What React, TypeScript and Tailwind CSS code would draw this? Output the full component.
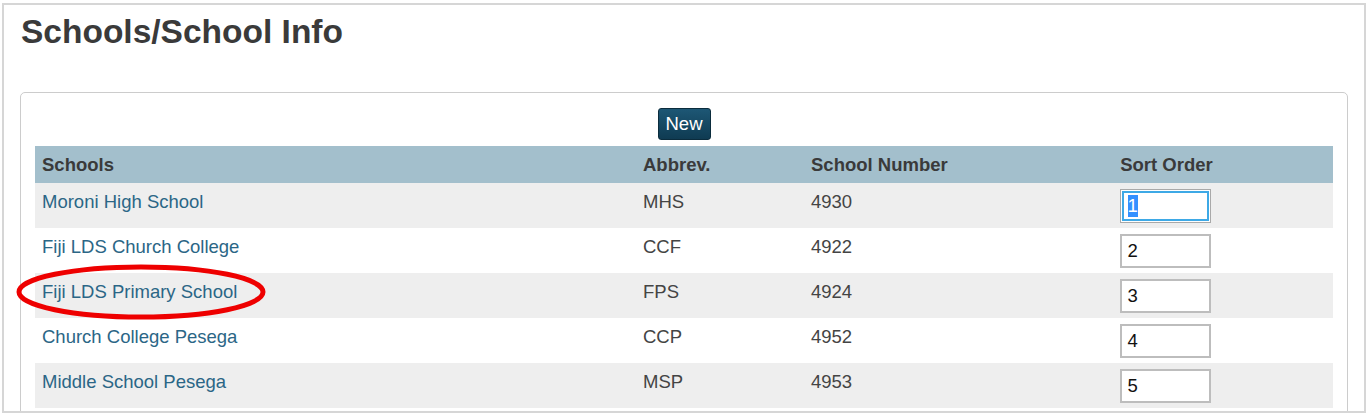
import React from 'react';

interface School {
  name: string;
  abbrev: string;
  number: string;
  order: string;
}

const schools: School[] = [
  { name: 'Moroni High School', abbrev: 'MHS', number: '4930', order: '1' },
  { name: 'Fiji LDS Church College', abbrev: 'CCF', number: '4922', order: '2' },
  { name: 'Fiji LDS Primary School', abbrev: 'FPS', number: '4924', order: '3' },
  { name: 'Church College Pesega', abbrev: 'CCP', number: '4952', order: '4' },
  { name: 'Middle School Pesega', abbrev: 'MSP', number: '4953', order: '5' },
];

const App: React.FC = () => {
  return (
    <div
      className="relative w-[1370px] h-[417px] bg-white overflow-hidden pt-[3px] pl-[2px]"
      style={{ fontFamily: '"Liberation Sans", Arial, sans-serif' }}
    >
      <div className="w-[1364px] h-[410px] border-2 border-[#d6d6d6] px-[16px] overflow-hidden">
        {/* Title */}
        <h1 className="text-[33.5px] leading-[38px] font-bold text-[#3a3a3a] pt-[8px] pl-[1px]">
          Schools/School Info
        </h1>

        {/* Card */}
        <div className="mt-[41px] w-[1328px] h-[400px] border border-[#cccccc] rounded-[5px] px-[14px] pt-[15px]">
          <div className="flex justify-center">
            <button className="h-[32px] w-[53px] rounded-[3px] border border-[#0b2c3d] bg-gradient-to-b from-[#1d5775] to-[#0f3b52] text-white text-[18.5px] leading-none">
              New
            </button>
          </div>

          {/* Table */}
          <div className="mt-[6px] w-[1298px] text-[18.5px]">
            <div className="flex h-[37px] items-center bg-[#a3bfcc] font-bold text-[#3a3a3a]">
              <div className="w-[601px] pl-[7px]">Schools</div>
              <div className="w-[168px] pl-[7px]">Abbrev.</div>
              <div className="w-[196px] pl-[7px]">School Number</div>
              <div className="flex-1 text-center">Sort Order</div>
            </div>
            {schools.map((s, i) => (
              <div
                key={s.name}
                className={`flex h-[45px] items-start pt-[6px] ${i % 2 === 0 ? 'bg-[#eeeeee]' : 'bg-white'}`}
              >
                <div className="w-[601px] pl-[7px] leading-[26px] text-[#2b6686]">{s.name}</div>
                <div className="w-[168px] pl-[7px] leading-[26px] text-[#444444]">{s.abbrev}</div>
                <div className="w-[196px] pl-[7px] leading-[26px] text-[#444444]">{s.number}</div>
                <div className="flex-1 flex justify-center pr-[3px]">
                  {i === 0 ? (
                    <div className="w-[91px] h-[34px] border border-[#a9a9a9] bg-white p-[1px]">
                      <div className="h-full border-2 border-[#3ea9e6] flex items-center pl-[4px]">
                        <span className="bg-[#3390ff] text-white leading-[22px] text-[18.5px]">1</span>
                      </div>
                    </div>
                  ) : (
                    <div className="w-[91px] h-[34px] border-2 border-[#bdbdbd] bg-white flex items-center pl-[6px] text-[18.5px] text-[#111]">
                      {s.order}
                    </div>
                  )}
                </div>
              </div>
            ))}
          </div>
        </div>
      </div>

      {/* Red annotation ellipse */}
      <svg className="absolute left-[14px] top-[261px]" width="254" height="62" viewBox="0 0 254 62">
        <ellipse cx="127" cy="31" rx="122" ry="25" fill="none" stroke="#ee0000" strokeWidth="5" />
      </svg>
    </div>
  );
};

export default App;
